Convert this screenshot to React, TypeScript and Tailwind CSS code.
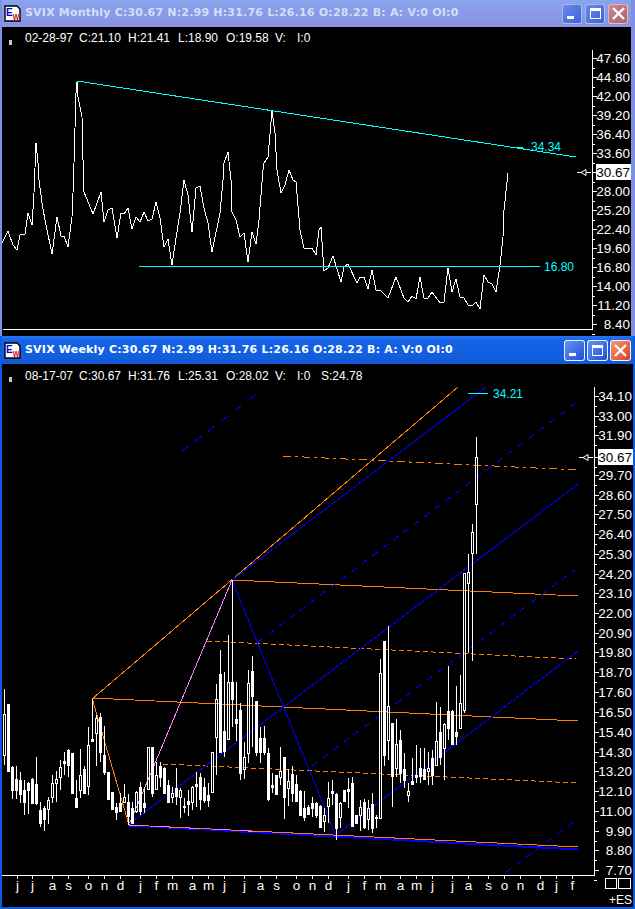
import type { ReactNode } from 'react'

const monthlyLine = [
  [2,243],[8,231],[13,245],[17,250],[20,235],[25,234],[28,213],[32,225],[34,193],[36,143],[38,163],[39,180],[42,203],[45,220],[52,254],[57,217],[61,236],[64,236],[68,247],[72,217],[73,193],[74,163],[76,93],[77,82],[78,97],[82,117],[83,160],[84,192],[93,214],[101,192],[104,222],[108,210],[112,208],[117,238],[121,213],[124,214],[128,208],[132,229],[136,217],[140,222],[144,212],[148,221],[152,219],[156,202],[160,218],[164,247],[168,239],[172,265],[176,238],[180,213],[184,180],[188,195],[192,232],[196,188],[200,186],[204,208],[208,223],[212,252],[220,213],[223,180],[224,163],[228,152],[231,180],[232,212],[236,220],[240,237],[244,233],[248,262],[252,232],[256,244],[259,220],[263,170],[264,163],[268,157],[272,111],[275,133],[277,170],[281,193],[285,185],[289,170],[293,180],[296,182],[300,230],[304,248],[312,248],[316,255],[319,230],[321,227],[324,271],[328,268],[333,256],[341,282],[344,267],[348,264],[357,283],[360,277],[364,277],[368,289],[372,270],[376,290],[380,290],[388,298],[396,277],[404,298],[408,302],[412,296],[416,299],[420,277],[424,298],[428,298],[432,292],[440,303],[444,302],[448,268],[452,292],[456,279],[460,297],[464,298],[468,305],[472,306],[476,302],[480,309],[484,275],[488,282],[492,284],[496,292],[500,265],[503,237],[504,210],[508,173],
]

// x, high, low, body top, body bottom, hollow (1) or filled (0)
const candles = [
  [4,689,765,714,755,1],[8,704,772,704,771,0],[12,766,799,767,790,0],[16,766,799,779,790,0],[20,772,803,780,794,0],[24,780,815,790,802,0],[28,782,814,783,790,0],[32,778,804,779,803,0],[36,757,805,784,803,0],[40,802,827,810,823,0],[44,806,831,808,819,0],[48,797,824,800,809,1],[52,775,803,783,797,1],[56,771,802,779,783,1],[60,760,790,767,777,1],[64,752,775,761,763,0],[68,749,777,750,765,0],[72,753,794,753,793,0],[76,780,808,798,807,0],[80,749,798,775,790,1],[84,766,794,769,793,0],[88,727,795,745,786,1],[92,699,742,739,741,0],[96,715,766,718,733,1],[100,713,762,717,752,0],[104,726,775,755,772,0],[108,772,799,772,799,0],[112,792,810,792,809,0],[116,803,820,807,812,0],[120,793,812,803,811,0],[124,784,803,797,802,1],[128,794,825,802,816,0],[132,802,824,808,823,0],[136,791,813,792,811,1],[140,782,815,787,811,0],[144,787,813,803,807,0],[148,747,790,747,789,1],[152,747,797,747,793,0],[156,762,790,775,789,1],[160,762,787,766,777,0],[164,767,793,768,793,0],[168,780,803,785,802,0],[172,787,803,793,797,1],[176,768,805,788,796,0],[180,788,818,790,797,1],[184,798,813,806,807,0],[188,790,816,801,804,0],[192,786,810,787,802,1],[196,772,807,784,786,0],[200,773,810,777,799,0],[204,778,803,787,800,0],[208,783,807,795,800,0],[212,752,793,752,792,1],[216,684,775,699,737,1],[220,650,752,674,752,0],[224,672,757,731,751,0],[228,635,740,682,739,1],[232,580,727,682,699,0],[236,682,741,719,723,0],[240,703,780,710,773,0],[244,742,779,757,769,1],[248,670,763,683,753,1],[252,656,747,671,696,0],[256,701,756,701,752,0],[260,727,763,738,752,0],[264,726,755,738,752,0],[268,748,801,753,799,0],[272,773,793,785,787,0],[276,775,794,775,794,0],[280,747,785,771,777,1],[284,757,819,757,797,0],[288,769,806,781,788,1],[292,766,802,774,793,0],[296,775,802,784,801,0],[300,790,815,791,815,0],[304,791,821,808,817,0],[308,805,815,807,814,0],[312,797,817,803,808,0],[316,802,818,803,815,0],[320,805,828,806,827,0],[324,808,832,815,821,1],[328,782,823,798,806,1],[332,780,805,791,793,0],[336,793,840,794,828,0],[340,802,828,803,817,1],[344,790,801,790,801,0],[348,778,808,789,791,0],[352,777,826,783,826,0],[356,815,823,815,823,0],[360,800,831,807,815,1],[364,799,829,802,827,0],[368,800,830,808,819,1],[372,793,833,804,828,0],[376,815,828,817,818,0],[380,659,818,673,818,1],[384,641,766,641,755,0],[388,626,760,706,740,1],[392,723,807,723,776,0],[396,719,777,744,768,1],[400,730,783,740,773,0],[404,753,788,769,780,0],[408,783,802,791,795,1],[412,758,785,781,784,0],[416,745,783,775,777,0],[420,748,783,768,776,0],[424,748,780,769,779,0],[428,752,785,768,771,1],[432,750,785,758,775,0],[436,702,765,741,765,1],[440,707,765,732,757,0],[444,723,780,724,748,1],[448,666,740,711,728,0],[452,710,745,711,744,0],[456,686,745,732,736,0],[460,675,729,703,728,1],[464,573,713,573,710,1],[468,554,653,572,583,1],[472,524,661,532,553,1],[476,437,554,457,504,1],
]

const monthlyAxis: [string, number][] = [['47.60',58],['44.80',77],['42.00',96],['39.20',115],['36.40',134],['33.60',153],['28.00',191],['25.20',210],['22.40',229],['19.60',248],['16.80',267],['14.00',286],['11.20',305],['8.40',324]]
const weeklyAxis: [string, number][] = [['34.10',396],['33.00',416],['31.90',435],['29.70',475],['28.60',495],['27.50',514],['26.40',534],['25.30',554],['24.20',574],['23.10',593],['22.00',613],['20.90',633],['19.80',652],['18.70',672],['17.60',692],['16.50',712],['15.40',732],['14.30',752],['13.20',771],['12.10',791],['11.00',811],['9.90',831],['8.80',850],['7.70',870]]
const months: [string, number][] = [['j',17],['j',32],['a',52],['s',68],['o',88],['n',104],['d',120],['j',140],['f',156],['m',172],['a',192],['m',208],['j',224],['j',244],['a',260],['s',276],['o',296],['n',312],['d',328],['j',348],['f',364],['m',380],['a',400],['m',416],['j',432],['j',452],['a',468],['s',488],['o',504],['n',520],['d',540],['j',556],['f',572]]

const infoWidths = ['w-[54px]', 'w-[49px]', 'w-[50px]', 'w-[48px]', 'w-[49px]', 'w-[22px]', 'w-[24px]', 'w-[60px]']
const BLUE = '#0000ff'
const ORANGE = '#ff8000'
const CYAN = '#00ffff'

function TitleIcon() {
  return (
    <svg width="17" height="17" viewBox="0 0 17 17" className="shrink-0 font-['Liberation_Sans',sans-serif] font-bold">
      <path d="M1 1h12l3 3v12H1z" fill="#fff" stroke="#000" strokeWidth="1.4" />
      <text x="2" y="10.5" fontSize="10" fill="#0000e0">E</text>
      <text x="8.7" y="14.5" fontSize="9" fill="#e00000" textLength="6.6" lengthAdjust="spacingAndGlyphs">W</text>
    </svg>
  )
}

function WinButton({ kind, active }: { kind: 'min' | 'max' | 'close'; active: boolean }) {
  const bg = kind === 'close'
    ? active ? 'bg-gradient-to-br from-[#f09a78] to-[#d83c10]' : 'bg-gradient-to-br from-[#c88c98] to-[#b06068]'
    : active ? 'bg-gradient-to-br from-[#6a90f0] to-[#1c50d8]' : 'bg-gradient-to-br from-[#6a88e8] to-[#3a64dc]'
  const size = active ? 'w-[21px] h-[21px]' : 'w-[20px] h-[20px]'
  return (
    <div className={`${size} rounded-[3px] border flex items-center justify-center ${active ? 'border-white/90' : 'border-white/50'} ${bg}`}>
      <svg width="15" height="15" viewBox="0 0 15 15" shapeRendering="crispEdges">
        {kind === 'min' && <rect x="2" y="10" width="7" height="3" fill="#fff" />}
        {kind === 'max' && <path d="M2 2h11v11H2z M3 5v7h9V5z" fill="#fff" fillRule="evenodd" />}
        {kind === 'close' && <path d="M2 2l11 11M13 2L2 13" stroke="#fff" strokeWidth="2.4" shapeRendering="auto" />}
      </svg>
    </div>
  )
}

function TitleBar({ title, active }: { title: string; active: boolean }) {
  const bar = active
    ? 'h-[28px] pr-[2px] bg-[conic-gradient(#ffffff14_25%,transparent_0_50%,#ffffff14_0_75%,transparent_0),linear-gradient(#1c6ef0,#0a5ae4_20%,#0858dc_75%,#0a50d0)] text-white'
    : 'h-[27px] pr-[3px] bg-[conic-gradient(#ffffff28_25%,transparent_0_50%,#ffffff28_0_75%,transparent_0),linear-gradient(#7f9cec,#7f92e6_50%,#8088e0)] text-[#d6def8]'
  return (
    <div className={`flex items-center pl-[2px] [background-size:2px_2px,auto] ${bar}`}>
      <TitleIcon />
      <span className="ml-[4px] font-['DejaVu_Sans',sans-serif] font-bold text-[11px] tracking-[0.2px] whitespace-nowrap flex-1">{title}</span>
      <div className={`flex ${active ? 'gap-[2px]' : 'gap-[3px]'}`}>
        <WinButton kind="min" active={active} />
        <WinButton kind="max" active={active} />
        <WinButton kind="close" active={active} />
      </div>
    </div>
  )
}

function InfoRow({ items, tall }: { items: string[]; tall?: boolean }) {
  return (
    <div className={`flex items-center pl-[7px] text-white text-[12px] font-['Liberation_Sans',sans-serif] whitespace-nowrap ${tall ? 'h-[23px]' : 'h-[22px]'}`}>
      <span className="w-[3px] h-[5px] mt-[8px] mr-[13px] bg-[#c8c8c8]" />
      {items.map((t, i) => (
        <span key={t} className={infoWidths[i]}>{t}</span>
      ))}
    </div>
  )
}

function Pointer({ y, x }: { y: number; x: number }) {
  return (
    <g stroke="#fff" fill="none" shapeRendering="crispEdges">
      <path d={`M${x} ${y + 0.5}h5M${x + 9} ${y + 0.5}h5`} />
      <path d={`M${x + 4} ${y + 0.5}l5 -3v6z`} fill="#000" shapeRendering="auto" />
    </g>
  )
}

function Axis({ x, top, bottom, labels, right, price, priceY }: { x: number; top: number; bottom: number; labels: [string, number][]; right: number; price: string; priceY: number }) {
  const all = [...labels.map((l) => l[1]), priceY]
  const step = (labels[1][1] - labels[0][1]) / 2
  return (
    <g>
      <rect x={x} y={top} width="1" height={bottom - top} fill="#fff" />
      {all.map((y) => (
        <g key={y}>
          <rect x={x} y={y} width="5" height="1" fill="#fff" />
          <rect x={x} y={Math.round(y + step)} width="3" height="1" fill="#fff" />
        </g>
      ))}
      {labels.map(([t, y]) => (
        <text key={t} x={right} y={y + 5} textAnchor="end" fontSize="13.5" fill="#fff">{t}</text>
      ))}
      <rect x={x + 4} y={priceY - 8} width={right - x - 3} height="16" fill="#fff" />
      <text x={right} y={priceY + 5} textAnchor="end" fontSize="13.5" fill="#000">{price}</text>
    </g>
  )
}

function Candle({ c }: { c: number[] }) {
  const [x, hi, lo, top, bot, hollow] = c
  const h = Math.max(bot - top, 1)
  return (
    <g fill="#fff">
      {hollow ? (
        <>
          <rect x={x} y={hi} width="1" height={Math.max(top - hi, 0)} />
          <rect x={x} y={bot} width="1" height={Math.max(lo - bot, 0)} />
          <path d={`M${x - 1} ${top}h3v${h + 1}h-3z M${x} ${top + 1}v${Math.max(h - 1, 0)}h1v${-Math.max(h - 1, 0)}z`} fillRule="evenodd" />
        </>
      ) : (
        <>
          <rect x={x} y={hi} width="1" height={lo - hi} />
          <rect x={x - 1} y={top} width="3" height={h + 1} />
        </>
      )}
    </g>
  )
}

function Line({ d, color, dash }: { d: number[]; color: string; dash?: string }) {
  return <line x1={d[0]} y1={d[1]} x2={d[2]} y2={d[3]} stroke={color} strokeDasharray={dash} />
}

function MonthlyChart() {
  return (
    <svg width="629" height="287" viewBox="2 49 629 287" className="block font-['Liberation_Sans',sans-serif]" shapeRendering="crispEdges">
      <polyline points={monthlyLine.map((p) => p.join(',')).join(' ')} fill="none" stroke="#fff" />
      <Line d={[77, 81, 576, 157]} color={CYAN} />
      <Line d={[139, 266, 540, 266]} color={CYAN} />
      <rect x="515" y="147" width="8" height="1" fill={CYAN} />
      <text x="531" y="151" fontSize="12" fill={CYAN}>34.34</text>
      <text x="544" y="271" fontSize="12" fill={CYAN}>16.80</text>
      <rect x="3" y="329" width="590" height="1" fill="#fff" />
      <Axis x={592} top={50} bottom={330} labels={monthlyAxis} right={630} price="30.67" priceY={172} />
      <Pointer x={577} y={172} />
    </svg>
  )
}

function WeeklyChart() {
  return (
    <svg width="631" height="520" viewBox="2 387 631 520" className="block font-['Liberation_Sans',sans-serif]" shapeRendering="crispEdges">
      <Line d={[92, 699, 458, 387]} color={ORANGE} />
      <Line d={[92, 698, 129, 825]} color={ORANGE} />
      <Line d={[92, 698, 578, 721]} color={ORANGE} />
      <Line d={[232, 580, 578, 596]} color={ORANGE} />
      <Line d={[283, 456, 578, 470]} color={ORANGE} dash="8 4 3 4" />
      <Line d={[207, 641, 576, 659]} color={ORANGE} dash="5 3" />
      <Line d={[163, 764, 578, 783]} color={ORANGE} dash="5 3" />
      <Line d={[232, 580, 129, 825]} color="#ff80ff" />
      <Line d={[232, 580, 336, 836]} color={BLUE} />
      <Line d={[232, 580, 486, 387]} color={BLUE} />
      <Line d={[129, 824, 578, 484]} color={BLUE} />
      <Line d={[336, 835, 578, 651]} color={BLUE} />
      <Line d={[258, 642, 577, 402]} color={BLUE} dash="7 6" />
      <Line d={[312, 766, 575, 570]} color={BLUE} dash="7 6" />
      <Line d={[505, 873, 578, 819]} color={BLUE} dash="7 6" />
      <Line d={[181, 452, 262, 390]} color={BLUE} dash="9 8" />
      <Line d={[129, 825, 578, 849]} color={BLUE} />
      <Line d={[129, 826, 578, 850]} color={BLUE} />
      <Line d={[129, 825, 578, 847]} color={ORANGE} />
      <Line d={[129, 825, 268, 832]} color="#ff80ff" dash="14 14" />
      {candles.map((c) => (
        <Candle key={c[0]} c={c} />
      ))}
      <rect x="468" y="393" width="20" height="1" fill={CYAN} />
      <text x="493" y="398" fontSize="12" fill={CYAN}>34.21</text>
      <rect x="2" y="875" width="593" height="1" fill="#fff" />
      {months.map(([m, x]) => (
        <g key={x}>
          <rect x={x} y="875" width="1" height="4" fill="#fff" />
          <text x={x + 0.5} y="890" textAnchor="middle" fontSize="13.5" fill="#fff">{m}</text>
        </g>
      ))}
      <Axis x={594} top={387} bottom={876} labels={weeklyAxis} right={632} price="30.67" priceY={457} />
      <Pointer x={579} y={457} />
      <rect x="605.5" y="878.5" width="11" height="10" fill="none" stroke="#fff" />
      <rect x="618.5" y="878.5" width="12" height="10" fill="none" stroke="#fff" />
      <text x="632" y="904" textAnchor="end" fontSize="12" fill="#fff">+ES</text>
    </svg>
  )
}

function Window({ title, active, className, children }: { title: string; active: boolean; className: string; children: ReactNode }) {
  return (
    <div className={className}>
      <TitleBar title={title} active={active} />
      <div className="bg-black">{children}</div>
    </div>
  )
}

export default function App() {
  return (
    <div className="w-[635px] h-[909px] overflow-hidden flex flex-col bg-[#0a5ae4]">
      <Window title="SVIX Monthly C:30.67 N:2.99 H:31.76 L:26.16 O:28.22 B: A: V:0 OI:0" active={false} className="h-[336px] bg-[#7e90e6] pl-[2px] pr-[4px]">
        <InfoRow items={['02-28-97', 'C:21.10', 'H:21.41', 'L:18.90', 'O:19.58', 'V:', 'I:0']} />
        <MonthlyChart />
      </Window>
      <Window title="SVIX Weekly C:30.67 N:2.99 H:31.76 L:26.16 O:28.22 B: A: V:0 OI:0" active className="h-[573px] bg-[#0a5ae4] pl-[2px] pr-[2px]">
        <InfoRow tall items={['08-17-07', 'C:30.67', 'H:31.76', 'L:25.31', 'O:28.02', 'V:', 'I:0', 'S:24.78']} />
        <WeeklyChart />
      </Window>
    </div>
  )
}
